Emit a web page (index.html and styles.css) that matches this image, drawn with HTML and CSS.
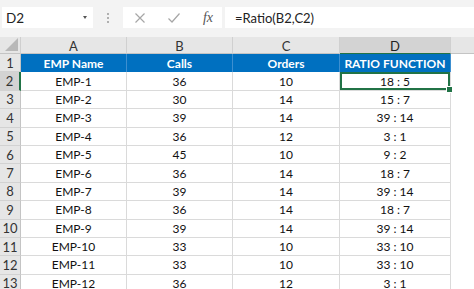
FILE: index.html
```html
<!DOCTYPE html>
<html>
<head>
<meta charset="utf-8">
<link rel="stylesheet" href="styles.css">
</head>
<body>
<div class="formula-bar">
  <div class="namebox"><span class="ref">D2</span><span class="caret"></span></div>
  <div class="grip"><i></i><i></i><i></i></div>
  <div class="fbuttons">
    <svg class="ic" width="12" height="12" viewBox="0 0 12 12"><path d="M1.5 1.5 L10.5 10.5 M10.5 1.5 L1.5 10.5" stroke="#a6a6a6" stroke-width="1.2" fill="none"/></svg>
    <svg class="ic" width="14" height="12" viewBox="0 0 14 12"><path d="M1.5 6.5 L5 10 L12.5 1.5" stroke="#a6a6a6" stroke-width="1.2" fill="none"/></svg>
    <span class="fx">fx</span>
  </div>
  <div class="finput">=Ratio(B2,C2)</div>
</div>
<div class="sheet">
  <div class="corner"><span class="tri"></span></div>
  <div class="ch">A</div><div class="ch">B</div><div class="ch">C</div><div class="ch sel">D</div><div class="ch rest"></div>

  <div class="rh">1</div><div class="hd">EMP Name</div><div class="hd">Calls</div><div class="hd">Orders</div><div class="hd">RATIO FUNCTION</div><div class="blank"></div>

  <div class="rh sel">2</div><div class="c">EMP-1</div><div class="c">36</div><div class="c">10</div><div class="c active">18 : 5</div><div class="blank"></div>
  <div class="rh">3</div><div class="c">EMP-2</div><div class="c">30</div><div class="c">14</div><div class="c">15 : 7</div><div class="blank"></div>
  <div class="rh">4</div><div class="c">EMP-3</div><div class="c">39</div><div class="c">14</div><div class="c">39 : 14</div><div class="blank"></div>
  <div class="rh">5</div><div class="c">EMP-4</div><div class="c">36</div><div class="c">12</div><div class="c">3 : 1</div><div class="blank"></div>
  <div class="rh">6</div><div class="c">EMP-5</div><div class="c">45</div><div class="c">10</div><div class="c">9 : 2</div><div class="blank"></div>
  <div class="rh">7</div><div class="c">EMP-6</div><div class="c">36</div><div class="c">14</div><div class="c">18 : 7</div><div class="blank"></div>
  <div class="rh">8</div><div class="c">EMP-7</div><div class="c">39</div><div class="c">14</div><div class="c">39 : 14</div><div class="blank"></div>
  <div class="rh">9</div><div class="c">EMP-8</div><div class="c">36</div><div class="c">14</div><div class="c">18 : 7</div><div class="blank"></div>
  <div class="rh">10</div><div class="c">EMP-9</div><div class="c">39</div><div class="c">14</div><div class="c">39 : 14</div><div class="blank"></div>
  <div class="rh">11</div><div class="c">EMP-10</div><div class="c">33</div><div class="c">10</div><div class="c">33 : 10</div><div class="blank"></div>
  <div class="rh">12</div><div class="c">EMP-11</div><div class="c">33</div><div class="c">10</div><div class="c">33 : 10</div><div class="blank"></div>
  <div class="rh">13</div><div class="c">EMP-12</div><div class="c">36</div><div class="c">12</div><div class="c">3 : 1</div><div class="blank"></div>
</div>
</body>
</html>
```
FILE: styles.css
```css
html, body {
  margin: 0;
  padding: 0;
  width: 474px;
  height: 289px;
  overflow: hidden;
  background: #f3f3f3;
  font-family: Lato, "Liberation Sans", sans-serif;
  color: #222;
}

.formula-bar {
  display: flex;
  align-items: stretch;
  height: 21px;
  padding: 7px 0 9px 2px;
  background: #f3f3f3;
}

.namebox {
  width: 91px;
  background: #fff;
  display: flex;
  align-items: center;
  justify-content: space-between;
  padding: 0 6px 0 4px;
  box-sizing: border-box;
}

.ref {
  font-size: 13.5px;
  color: #222;
}

.caret {
  width: 0;
  height: 0;
  border-left: 2.5px solid transparent;
  border-right: 2.5px solid transparent;
  border-top: 3px solid #555;
}

.grip {
  width: 30px;
  display: flex;
  flex-direction: column;
  align-items: center;
  justify-content: center;
  gap: 2px;
}

.grip i {
  width: 2px;
  height: 2px;
  background: #9a9a9a;
  border-radius: 1px;
}

.fbuttons {
  width: 99px;
  background: #fff;
  display: flex;
  align-items: center;
  justify-content: space-between;
  padding: 0 9px 0 11px;
  box-sizing: border-box;
}

.fx {
  font-family: "Liberation Serif", serif;
  font-style: italic;
  font-size: 14px;
  color: #555;
}

.finput {
  flex: 1;
  margin-left: 3px;
  background: #fff;
  display: flex;
  align-items: center;
  padding-left: 10px;
  font-size: 13px;
  color: #222;
}

.sheet {
  display: grid;
  grid-template-columns: 21px 106px 106px 107px 111px 23px;
  grid-template-rows: 17px;
  grid-auto-rows: 18.4px;
  font-size: 12px;
}

.sheet > div {
  display: flex;
  align-items: center;
  justify-content: center;
  box-sizing: border-box;
}

.corner {
  background: #e6e6e6;
  border-right: 1px solid #cfcfcf;
  border-bottom: 1px solid #c4c4c4;
  position: relative;
}

.tri {
  position: absolute;
  right: 2px;
  bottom: 2px;
  width: 0;
  height: 0;
  border-left: 13px solid transparent;
  border-bottom: 13px solid #b8b8b8;
}

.ch {
  background: #e6e6e6;
  border-right: 1px solid #d0d0d0;
  border-bottom: 1px solid #c4c4c4;
  font-size: 13px;
  color: #333;
  padding-top: 1px;
}

.ch.sel {
  background: #d3d3d3;
  border-bottom: 1px solid #217346;
  color: #222;
}

.ch.rest {
  border-right: none;
}

.rh {
  background: #e6e6e6;
  border-right: 1px solid #c4c4c4;
  border-bottom: 1px solid #d2d2d2;
  font-size: 13px;
  color: #333;
}

.rh.sel {
  background: #d3d3d3;
  border-right: 2px solid #217346;
}

.hd {
  background: #0070c0;
  color: #fff;
  font-weight: bold;
  font-size: 12px;
  border-right: 1px solid #3d8fd0;
}

.c {
  background: #fff;
  border-right: 1px solid #dadada;
  border-bottom: 1px solid #dadada;
  color: #111;
}

.blank {
  background: #fff;
}

.c.active {
  position: relative;
  box-shadow: inset 0 0 0 2px #217346;
}

.c.active::after {
  content: "";
  position: absolute;
  right: -3px;
  bottom: -3px;
  width: 5px;
  height: 5px;
  background: #217346;
  border: 1px solid #fff;
  z-index: 2;
}
```
